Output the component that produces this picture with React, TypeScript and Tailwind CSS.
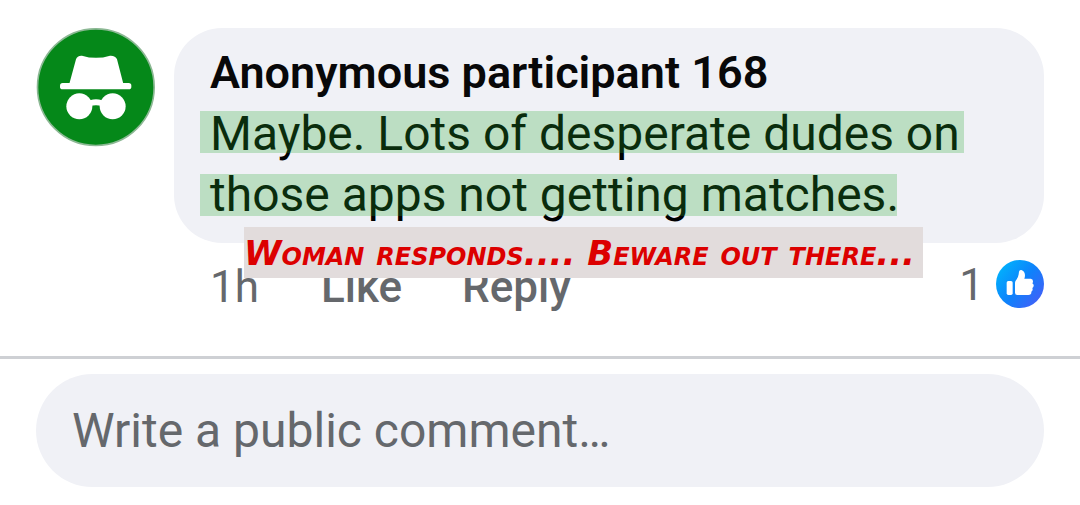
import React, { useState } from "react";

const commentLines = [
  { text: "Maybe. Lots of desperate dudes on", mark: "top-2 -right-1" },
  { text: "those apps not getting matches.", mark: "top-2.5 right-0.5" },
];

const IncognitoAvatar = () => (
  <svg
    viewBox="-2 0 357 357"
    className="size-[119px] shrink-0"
    role="img"
    aria-label="Anonymous participant"
  >
    <circle cx="177.5" cy="177.5" r="175" fill="#058819" stroke="#8cb894" strokeWidth="5" />
    <g fill="#fff">
      <path d="M98 167 L118 94 Q122 82 136 83 Q178 96 220 83 Q236 82 241 94 L260 167 Z" />
      <rect x="70" y="165" width="214" height="19" rx="8" />
      <circle cx="128" cy="235" r="39" />
      <circle cx="228" cy="235" r="39" />
      <path d="M160 217 Q178 211 196 217 V235 Q178 228 160 235 Z" />
    </g>
  </svg>
);

const LikeBadge = () => (
  <svg viewBox="0 0 144 144" className="size-12 shrink-0" aria-hidden="true">
    <defs>
      <linearGradient id="like-fill" x1="0.1" y1="0.2" x2="0.9" y2="0.85">
        <stop offset="0" stopColor="#02adfc" />
        <stop offset="0.5" stopColor="#0e82fb" />
        <stop offset="1" stopColor="#3f62f8" />
      </linearGradient>
    </defs>
    <circle cx="72" cy="72" r="72" fill="url(#like-fill)" />
    <g fill="#fff">
      <rect x="32" y="63" width="18" height="42" rx="5" />
      <path d="M57 68 Q57 63 61 59 Q67 52 68 43 L69 35 Q70 29 76 30 Q86 33 87 45 Q87 51 85 56 H104 Q111 57 111 64 Q111 68 109 70 Q114 73 113 78 Q112 82 109 84 Q112 92 106 95 Q107 105 97 105 H64 Q57 105 57 98 Z" />
    </g>
  </svg>
);

const Comment = () => (
  <article className="flex gap-[19px] px-9">
    <IncognitoAvatar />
    <div className="relative flex-1">
      <div className="rounded-[48px] bg-[#f0f1f6] pl-9 pr-6 pt-[18px] pb-[18px]">
        <h2 className="text-[45px] leading-[53px] font-semibold text-[#080809]">
          Anonymous participant 168
        </h2>
        <p className="mt-1 text-[48px] leading-[61px] text-black">
          {commentLines.map((line) => (
            <span key={line.text} className="relative block w-fit">
              {line.text}
              <span className={`absolute -left-2.5 h-[42px] bg-[rgba(40,169,50,0.26)] ${line.mark}`} />
            </span>
          ))}
        </p>
      </div>
      <div className="mt-[17px] flex items-start pl-9 text-[44px] leading-[55px] text-[#65686c]">
        <span>1h</span>
        <button type="button" className="ml-[62px] font-medium">
          Like
        </button>
        <button type="button" className="ml-[60px] font-medium">
          Reply
        </button>
        <div className="ml-auto flex items-start gap-3">
          <span className="leading-[51px]">1</span>
          <LikeBadge />
        </div>
      </div>
      <div className="absolute top-[199px] left-[70px] h-[51px] bg-[#e2dcdc] pr-2 font-['DejaVu_Sans',sans-serif] text-[34px] leading-[53px] font-bold whitespace-nowrap text-[#dc0000] italic [font-variant-caps:small-caps]">
        Woman responds.... Beware out there...
      </div>
    </div>
  </article>
);

const CommentBox = () => {
  const [text, setText] = useState("");

  return (
    <form className="px-9 pt-[15px]" onSubmit={(e) => e.preventDefault()}>
      <input
        type="text"
        aria-label="Write a public comment"
        placeholder="Write a public comment…"
        value={text}
        onChange={(e) => setText(e.target.value)}
        className="block h-[113px] w-full rounded-full bg-[#f0f1f6] px-9 text-[48px] text-black outline-none placeholder:text-[#65686c]"
      />
    </form>
  );
};

const App = () => {
  return (
    <main className="w-full bg-white pt-7 pb-[18px] font-['Roboto',sans-serif]">
      <Comment />
      <hr className="mt-[41px] border-t-[3px] border-[#ced0d4]" />
      <CommentBox />
    </main>
  );
};

export default App;
